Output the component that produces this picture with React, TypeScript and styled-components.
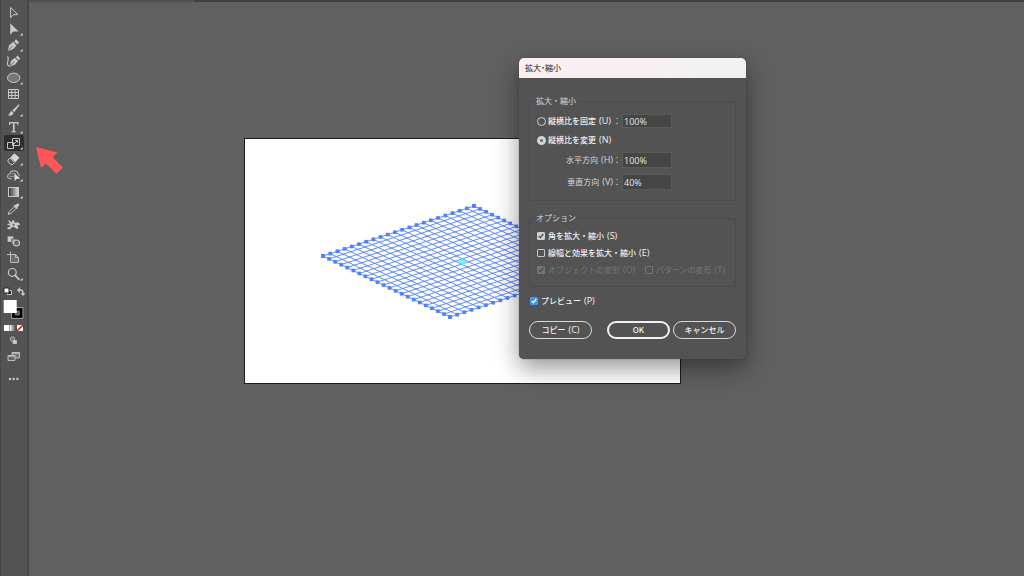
import React, { useState } from "react";
import styled, { createGlobalStyle, css } from "styled-components";

const GlobalStyle = createGlobalStyle`
  *, *::before, *::after { box-sizing: border-box; }
  body {
    margin: 0;
    background: #606060;
    font-family: "Noto Sans CJK JP", sans-serif;
    font-size: 8px;
    line-height: 12px;
    color: #ececec;
  }
  button, input { font: inherit; color: inherit; }
`;

const Screen = styled.div`
  display: flex;
  min-height: 100vh;
`;

const Toolbar = styled.nav`
  flex: none;
  width: 29px;
  padding: 5px 3px 0;
  background: #535353;
  border-left: 1px solid #484848;
  border-right: 2px solid #474747;
  display: flex;
  flex-direction: column;
  gap: 1px;
`;

const ToolGroup = styled.div`
  display: flex;
  flex-direction: column;
`;

const ToolButton = styled.button<{ $active?: boolean; $height?: number }>`
  display: block;
  width: 20px;
  height: ${(p) => p.$height ?? 16}px;
  padding: 0;
  border: 0;
  border-radius: 2px;
  background: ${(p) => (p.$active ? "#2e2e2e" : "transparent")};

  svg { display: block; overflow: visible; }
`;

const Workspace = styled.main`
  position: relative;
  flex: 1;
  overflow: hidden;
  background: #606060;
`;

const TabStrip = styled.div`
  height: 2px;
  background: #424242;
`;

const ActiveTab = styled.div`
  width: 165px;
  height: 2px;
  background: #505050;
`;

const Artboard = styled.div`
  position: absolute;
  left: 215px;
  top: 138px;
  border: 1px solid #1c1c1c;
  background: #fff;

  svg { display: block; }
`;

const Pointer = styled.svg`
  position: absolute;
  left: 7px;
  top: 146px;
`;

const Dialog = styled.section`
  position: absolute;
  left: 490px;
  top: 58px;
  width: 227px;
  border-radius: 5px;
  background: #535353;
  box-shadow: 0 0 1px #333, 0 9px 24px rgba(0, 0, 0, 0.42);
`;

const TitleBar = styled.h1`
  margin: 0;
  height: 20px;
  padding: 0 6px;
  border-radius: 5px 5px 0 0;
  background: linear-gradient(90deg, #f9eef0 0 45%, #f2f2f2 85%);
  color: #222;
  font-size: 8px;
  font-weight: 400;
  line-height: 20px;
  font-feature-settings: "palt";
`;

const DialogForm = styled.form`
  padding: 18px 10px 20px;
`;

const Group = styled.fieldset<{ $gap: number; $top: number }>`
  margin: 0 0 12px;
  padding: ${(p) => p.$top}px 7px 10px;
  border: 1px solid #4a4a4a;
  border-radius: 2px;
  min-width: 0;

  & > div { display: flex; flex-direction: column; gap: ${(p) => p.$gap}px; }
`;

const Legend = styled.legend`
  margin-left: -2px;
  padding: 0 1px;
  height: 10px;
  line-height: 10px;
  color: #d6d6d6;
`;

const Row = styled.div<{ $height: number }>`
  display: flex;
  align-items: center;
  height: ${(p) => p.$height}px;
  gap: 1px;
`;

const FieldLabel = styled.div<{ $end?: boolean }>`
  display: flex;
  align-items: center;
  justify-content: ${(p) => (p.$end ? "flex-end" : "flex-start")};
  width: 84px;
  color: #d6d6d6;
  white-space: nowrap;
`;

const Colon = styled.span<{ $push?: boolean }>`
  ${(p) => p.$push && css`margin-left: auto;`}
`;

const Choice = styled.label<{ $disabled?: boolean; $gap?: number; $width?: number }>`
  display: flex;
  align-items: center;
  gap: ${(p) => p.$gap ?? 3}px;
  ${(p) => p.$width && css`width: ${p.$width}px;`}
  height: 12px;
  font-weight: ${(p) => (p.$disabled ? 400 : 500)};
  color: ${(p) => (p.$disabled ? "#757575" : "#f2f2f2")};
  white-space: nowrap;
`;

const Key = styled.span`
  font-family: "Open Sans", "Noto Sans CJK JP", sans-serif;
  font-size: 9px;
  margin-left: 3px;
`;

const Radio = styled.input`
  appearance: none;
  flex: none;
  width: 9px;
  height: 9px;
  margin: 0;
  border: 1px solid #cfcfcf;
  border-radius: 50%;

  &:checked {
    border: 3px solid #d4d4d4;
    background: #6a6a6a;
  }
`;

const TickWrap = styled.span`
  position: relative;
  flex: none;
  width: 8px;
  height: 8px;

  svg { position: absolute; inset: 0; pointer-events: none; }
`;

const TickInput = styled.input<{ $fill: string }>`
  appearance: none;
  display: block;
  width: 8px;
  height: 8px;
  margin: 0;
  border: 1px solid ${(p) => (p.disabled ? "#757575" : "#c8c8c8")};
  border-radius: 1px;

  &:checked {
    background: ${(p) => p.$fill};
    border-color: ${(p) => p.$fill};
  }
`;

const ValueInput = styled.input`
  width: 50px;
  height: 100%;
  padding: 1px 1px 0;
  border: 1px solid #5a5a5a;
  background: #454545;
  color: #e6e6e6;
  font-family: "Open Sans", sans-serif;
  font-size: 9px;
  line-height: 12px;
`;

const PreviewRow = styled.div`
  margin: -4px 0 14px 1px;
`;

const Actions = styled.div`
  display: flex;
  gap: 3px;
`;

const PillButton = styled.button<{ $primary?: boolean; $first?: boolean }>`
  flex: none;
  width: 63px;
  height: 18px;
  padding: 0;
  border: ${(p) => (p.$primary ? "2px solid #f0f0f0" : "1px solid #d8d8d8")};
  border-radius: 9px;
  background: transparent;
  color: #f2f2f2;
  font-weight: 500;
  line-height: 14px;
  ${(p) => p.$first && css`margin-right: auto;`}
`;

const L = "#c9c9c9";
const Flyout = () => <path d="M18.6 12v2.6H16z" fill="#e0e0e0" />;

type Tool = { name: string; art: React.ReactNode; flyout?: boolean };

const toolGroups: Tool[][] = [
  [
    { name: "選択", art: <path d="M6.6 2.4v10.4l2.700-3 4.500-.3z" fill="none" stroke={L} strokeWidth="1" /> },
    { name: "ダイレクト選択", flyout: true, art: <path d="M6.2 2.2v11.6l3.2-3.2 5.2-.2z" fill={L} /> },
    {
      name: "ペン", flyout: true,
      art: <g><path d="M3.8 14.2 5 8.4l4.2-3.6 3.2 3.6L9.3 12z" fill={L} /><path d="M10.2 4.4 12 2.3l3 3.2-1.8 2z" fill={L} /><path d="m4.2 13.8 4-4.6" stroke="#535353" strokeWidth=".8" /></g>,
    },
    {
      name: "曲線", art: <g><path d="M3.4 3.5c2.4 1.7-.7 5.4.2 8 .5 1.6 2.3 1.8 3.7 1.3" fill="none" stroke={L} strokeWidth="1.1" /><path d="m6 13.4.8-5.3 4.2-3.4 3 3.4-3.2 3.6z" fill={L} /><path d="m11.8 4.3 1.6-1.9 2.9 3-1.7 1.9z" fill={L} /><path d="m6.4 13 3.8-4.2" stroke="#535353" strokeWidth=".8" /></g>,
    },
  ],
  [
    { name: "楕円形", flyout: true, art: <ellipse cx="9.7" cy="7.8" rx="6.2" ry="4.7" fill="#777" stroke={L} strokeWidth="1" /> },
    { name: "長方形グリッド", art: <path d="M4.5 3.5h10v9h-10zM7.8 3.5v9M11.2 3.5v9M4.5 6.5h10M4.5 9.5h10" fill="none" stroke={L} strokeWidth="1" /> },
    { name: "ブラシ", flyout: true, art: <g><path d="M8.3 8.4 14.8 2.2l.8.8-5.5 7.3z" fill={L} /><path d="M7.7 8.9 9.6 11c-.6 2.3-3 2.9-5.7 2.4 1.8-1.2 1.7-3.9 3.8-4.5z" fill={L} /></g> },
  ],
  [
    { name: "文字", flyout: true, art: <path d="M5 3h9.4v3h-1l-.5-1.7h-2.3V12l1.6.4v.8H7.3v-.8l1.6-.4V4.3H6.5L6 6H5z" fill={L} /> },
    {
      name: "拡大・縮小", flyout: true,
      art: <g fill="none" stroke="#c4c4c4" strokeWidth="1"><path d="M8.5 3.5h7v7h-7zM3.500 7.500h6v6h-6z" /><path d="M9.500 9.500 13.300 5.700M11.200 5.500h2.300v2.300" /></g>,
    },
    { name: "消しゴム", flyout: true, art: <g><path d="m10.4 2.300 5 4.5-4 4.4-5-4.7z" fill="#d6d6d6" /><path d="m6 7 4.7 4.500-2 2H7L4 10.800V9z" fill="none" stroke={L} strokeWidth="1" /></g> },
    {
      name: "シェイプ形成", flyout: true,
      art: <g><path d="M8 11.800H6.2C4.500 11.700 3.300 10.500 3.600 9c.2-1.400 1.300-2.100 2.500-2.200C6.500 4.600 8 3.600 9.800 3.900c2.200-.1 4 .7 4.200 2.800 1.200.8 1.400 1.700.8 2.400" fill="none" stroke="#b4b4b4" strokeWidth="1.100" /><path d="M5.300 9.300h5M7.900 7c1.600-1 3.200-.8 4 .4" fill="none" stroke="#b4b4b4" strokeWidth=".8" /><path d="M10.500 6.500v7.500l2-2 3.700-.4z" fill="#dedede" /></g>,
    },
  ],
  [
    { name: "グラデーション", flyout: true, art: <g><rect x="4.5" y="3.5" width="10" height="9" fill="url(#tool-fade)" stroke={L} /></g> },
  ],
  [
    { name: "スポイト", art: <g><path d="m4.2 13.4 1.2-3.1 5-4.8 1.8 1.9-5 4.8z" fill="none" stroke={L} strokeWidth="1" /><path d="m9.4 4.6 1-.9.8.5 1.7-1.5c1.5-1 3 .5 2 2l-1.6 1.7.6.8-1 .9z" fill={L} /></g> },
    {
      name: "パペットワープ",
      art: <g><path d="M4 3.700 5.500 3.200 7.500 5.500 8.700 3l1.600.5.3 2.300 3-.6 2.400 1.500-.4 1.600-2.200-.5 1 3.400-1.500.8-3-2.300-2 .6-2 2.200-2.700-.7.600-1.500 1.800-.2.800-1.800-3-.2.200-1.400 2.500-.2z" fill={L} /><circle cx="9.500" cy="7.700" r="1" fill="#535353" /></g>,
    },
    {
      name: "ブレンド",
      art: <g><path d="M3.6 3.4h5.8v5.4H3.6z" fill={L} /><path d="M7.5 6h4.4v5.2H7.5z" fill="#999" stroke="#535353" strokeWidth=".6" /><circle cx="12.5" cy="10" r="3" fill="#666" stroke={L} strokeWidth="1.1" /></g>,
    },
    { name: "アートボード", art: <g fill="none" stroke="#bcbcbc"><path d="M6.500 5.500h5l3 3v5h-8z" fill="#6c6c6c" /><path d="M6.500 2.500v3M3 5.500h3.500M11.500 5.500v3h3" /></g> },
  ],
  [
    { name: "ズーム", flyout: true, art: <g fill="none" stroke={L}><circle cx="8.3" cy="6.4" r="3.9" strokeWidth="1.2" /><path d="m11.2 9.3 3.8 4" strokeWidth="1.8" strokeLinecap="round" /></g> },
  ],
];

function Tick({ color }: { color: string }) {
  return (
    <svg width="8" height="8" viewBox="0 0 8 8" aria-hidden="true">
      <path d="m1.7 4.1 1.6 1.6 3-3.7" fill="none" stroke={color} strokeWidth="1.2" />
    </svg>
  );
}

type CheckProps = { label: string; hint: string; on?: boolean; disabled?: boolean; width?: number; fill?: string };

function Check({ label, hint, on = false, disabled, width, fill }: CheckProps) {
  const [checked, setChecked] = useState(on);
  return (
    <Choice $disabled={disabled} $width={width}>
      <TickWrap>
        <TickInput
          type="checkbox"
          $fill={fill ?? (disabled ? "#757575" : "#cfcfcf")}
          checked={checked}
          disabled={disabled}
          onChange={(e) => setChecked(e.target.checked)}
        />
        {checked && <Tick color={fill ? "#fff" : "#484848"} />}
      </TickWrap>
      <span>{label}<Key>({hint})</Key></span>
    </Choice>
  );
}

const CELLS = 21;
const LEFT = [78, 117];
const TOP = [229, 67];
const BOTTOM = [205, 178];

function at(u: number, v: number): [number, number] {
  return [
    LEFT[0] + (TOP[0] - LEFT[0]) * u + (BOTTOM[0] - LEFT[0]) * v,
    LEFT[1] + (TOP[1] - LEFT[1]) * u + (BOTTOM[1] - LEFT[1]) * v,
  ];
}

function MeshDrawing() {
  const steps = Array.from({ length: CELLS + 1 }, (_, i) => i / CELLS);
  const lines = steps
    .map((t) => `M${at(t, 0)}L${at(t, 1)}M${at(0, t)}L${at(1, t)}`)
    .join("");
  const anchors = steps.flatMap((t) => [at(t, 0), at(t, 1), at(0, t), at(1, t)]);
  return (
    <svg width="435" height="244" viewBox="0 0 435 244" role="img" aria-label="グリッド">
      <path d={lines} fill="none" stroke="#4f7dfa" strokeWidth=".9" />
      {anchors.map(([x, y], i) => (
        <rect key={i} x={x - 1.8} y={y - 1.8} width="3.6" height="3.6" fill="#4f7fff" />
      ))}
      <path d="M217.5 119v8M213.5 123h8" stroke="#5ff0ff" strokeWidth="1.2" />
      <circle cx="217.5" cy="123" r="2" fill="none" stroke="#5ff0ff" strokeWidth="1.2" />
    </svg>
  );
}

export default function App() {
  const [mode, setMode] = useState("free");
  const [uniform, setUniform] = useState("100%");
  const [horizontal, setHorizontal] = useState("100%");
  const [vertical, setVertical] = useState("40%");

  return (
    <>
      <GlobalStyle />
      <Screen>
        <Toolbar aria-label="ツール">
          {toolGroups.map((group, i) => (
            <ToolGroup key={i}>
              {group.map((tool) => (
                <ToolButton key={tool.name} type="button" aria-label={tool.name} $active={tool.name === "拡大・縮小"}>
                  <svg width="20" height="16" viewBox="0 0 20 16">
                    <defs>
                      <linearGradient id="tool-fade"><stop stopColor="#333" /><stop offset="1" stopColor="#ddd" /></linearGradient>
                    </defs>
                    {tool.art}
                    {tool.flyout && <Flyout />}
                  </svg>
                </ToolButton>
              ))}
            </ToolGroup>
          ))}
          <ToolGroup>
            <ToolButton type="button" aria-label="塗りと線" $height={38}>
              <svg width="20" height="38" viewBox="0 0 20 38">
                <path d="M3 7.5h4.500v4H3z" fill="#222" stroke={L} />
                <path d="M0 5h5v5H0z" fill="#fff" stroke="#222" />
                <path d="M15 7h1.500q2.500 0 2.500 3v1" fill="none" stroke={L} strokeWidth="1.4" />
                <path d="M13 7 16 4v6zM16.500 10.300h5L19 13z" fill={L} />
                <path d="M7.5 24.500h11.500v11H7.500z" fill="#535353" stroke="#aaa" strokeWidth=".8" />
                <path d="M9.5 26.500h7.500v7H9.500z" fill="#5a5a5a" stroke="#000" strokeWidth="2.6" />
                <path d="M11.3 28.300h4v3.500h-4z" fill="none" stroke="#999" strokeWidth=".6" />
                <path d="M-.3 17h13v13h-13z" fill="#fff" />
              </svg>
            </ToolButton>
            <ToolButton type="button" aria-label="カラー" $height={14}>
              <svg width="20" height="14" viewBox="0 0 20 14">
                <defs><linearGradient id="mode-fade"><stop stopColor="#eee" /><stop offset="1" stopColor="#555" /></linearGradient></defs>
                <path d="M0 4h5.5v6H0z" fill="#fff" />
                <path d="M6 4h5.5v6H6z" fill="url(#mode-fade)" />
                <path d="M13 4h6v6h-6z" fill="#fff" />
                <path d="m13 10 6-6" stroke="#e02020" strokeWidth="1.7" />
              </svg>
            </ToolButton>
            <ToolButton type="button" aria-label="描画モード" $height={12}>
              <svg width="20" height="12" viewBox="0 0 20 12">
                <circle cx="8.5" cy="4" r="2.3" fill="#777" stroke="#aaa" />
                <path d="M9 5.500h3.500v3H9z" fill="#ccc" stroke="#bbb" />
              </svg>
            </ToolButton>
            <ToolButton type="button" aria-label="スクリーンモード" $height={20}>
              <svg width="20" height="20" viewBox="0 0 20 20">
                <path d="M8 5.500h7.500v5.500H8z" fill="#777" stroke="#bdbdbd" />
                <path d="M4 8.500h7v5H4z" fill="#666" stroke="#bdbdbd" />
                <path d="M8 6h7.500M4 9h7" stroke="#bdbdbd" strokeWidth="1.5" />
              </svg>
            </ToolButton>
            <ToolButton type="button" aria-label="ツールバーを編集" $height={24}>
              <svg width="20" height="24" viewBox="0 0 20 24">
                <g fill={L}><circle cx="6" cy="12" r="1.2" /><circle cx="9.7" cy="12" r="1.2" /><circle cx="13.4" cy="12" r="1.2" /></g>
              </svg>
            </ToolButton>
          </ToolGroup>
        </Toolbar>

        <Workspace>
          <TabStrip><ActiveTab /></TabStrip>
          <Artboard><MeshDrawing /></Artboard>
          <Pointer width="28" height="29" viewBox="0 0 28 29" aria-hidden="true">
            <path d="M0 1 21.5 6.500 16.500 11 27 21.500 20.500 28 10 17.500 5 22z" fill="#ff5757" />
          </Pointer>

          <Dialog role="dialog" aria-labelledby="dialog-title">
            <TitleBar id="dialog-title">拡大・縮小</TitleBar>
            <DialogForm onSubmit={(e) => e.preventDefault()}>
              <Group $gap={6} $top={8}>
                <Legend>拡大・縮小</Legend>
                <div>
                  <Row $height={14}>
                    <FieldLabel>
                      <Choice $gap={2}>
                        <Radio type="radio" name="mode" checked={mode === "uniform"} onChange={() => setMode("uniform")} />
                        <span>縦横比を固定<Key>(U)</Key></span>
                      </Choice>
                      <Colon $push>：</Colon>
                    </FieldLabel>
                    <ValueInput aria-label="縦横比を固定" value={uniform} onChange={(e) => setUniform(e.target.value)} />
                  </Row>
                  <Row $height={12}>
                    <Choice $gap={2}>
                      <Radio type="radio" name="mode" checked={mode === "free"} onChange={() => setMode("free")} />
                      <span>縦横比を変更<Key>(N)</Key></span>
                    </Choice>
                  </Row>
                  <Row $height={16}>
                    <FieldLabel $end>
                      <label htmlFor="horizontal">水平方向<Key>(H)</Key></label>
                      <Colon>：</Colon>
                    </FieldLabel>
                    <ValueInput id="horizontal" value={horizontal} onChange={(e) => setHorizontal(e.target.value)} />
                  </Row>
                  <Row $height={16}>
                    <FieldLabel $end>
                      <label htmlFor="vertical">垂直方向<Key>(V)</Key></label>
                      <Colon>：</Colon>
                    </FieldLabel>
                    <ValueInput id="vertical" value={vertical} onChange={(e) => setVertical(e.target.value)} />
                  </Row>
                </div>
              </Group>

              <Group $gap={5} $top={7}>
                <Legend>オプション</Legend>
                <div>
                  <Check label="角を拡大・縮小" hint="S" on />
                  <Check label="線幅と効果を拡大・縮小" hint="E" />
                  <Row $height={12}>
                    <Check label="オブジェクトの変形" hint="O" on disabled width={107} />
                    <Check label="パターンの変形" hint="T" disabled />
                  </Row>
                </div>
              </Group>

              <PreviewRow>
                <Check label="プレビュー" hint="P" on fill="#4498ea" />
              </PreviewRow>

              <Actions>
                <PillButton type="button" $first>コピー<Key>(C)</Key></PillButton>
                <PillButton type="submit" $primary>OK</PillButton>
                <PillButton type="button">キャンセル</PillButton>
              </Actions>
            </DialogForm>
          </Dialog>
        </Workspace>
      </Screen>
    </>
  );
}
